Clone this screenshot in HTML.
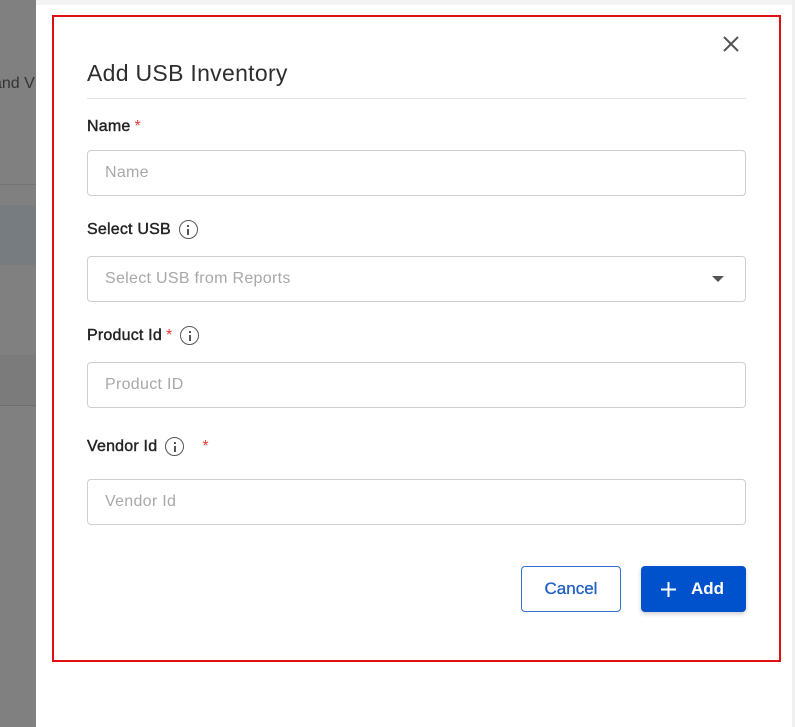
<!DOCTYPE html>
<html><head><style>
body{margin:0;width:795px;height:727px;background:#fff;position:relative;overflow:hidden;font-family:"Liberation Sans",sans-serif;}
.a{position:absolute}
.lbl{position:absolute;left:87px;font-size:16px;font-weight:normal;-webkit-text-stroke:0.4px #222;color:#222;letter-spacing:0.2px}
.req{color:#e53935;-webkit-text-stroke:0;margin-left:4px}
.inp{position:absolute;left:87px;width:657px;height:44px;border:1px solid #cfcfcf;border-radius:4px;box-sizing:content-box}
.ph{position:absolute;left:17px;top:13px;font-size:16px;color:#a8a8a8;letter-spacing:0.3px}
.info{display:inline-block;width:17px;height:17px;border:1.6px solid #555;border-radius:50%;vertical-align:-5px;position:relative;margin-left:8px;-webkit-text-stroke:0}
.info:before{content:"";position:absolute;left:7.5px;top:3.5px;width:2px;height:2px;background:#555}
.info:after{content:"";position:absolute;left:7.5px;top:7.5px;width:2px;height:6px;background:#555}
</style></head><body>
<div class="a" style="left:0;top:0;width:36px;height:727px;background:#808080"></div>
<div class="a" style="left:0;top:184px;width:36px;height:1px;background:#737373"></div>
<div class="a" style="left:0;top:205px;width:36px;height:60px;background:#767c80"></div>
<div class="a" style="left:0;top:355px;width:36px;height:50px;background:#7b7b7b"></div>
<div class="a" style="left:0;top:405px;width:36px;height:1px;background:#6e6e6e"></div>
<div class="a" style="left:0;top:75px;font-size:16px;color:#333;white-space:nowrap;width:36px;overflow:hidden"><span style="margin-left:-7px">and V</span></div>
<div class="a" style="left:36px;top:0;width:759px;height:5px;background:#f3f3f3"></div>
<div class="a" style="left:792px;top:0;width:3px;height:727px;background:#f0f0f0"></div>
<div class="a" style="left:52px;top:15px;width:725px;height:643px;border:2px solid #e01010"></div>
<svg class="a" style="left:722px;top:35px" width="18" height="18"><path d="M2 2L16 16M16 2L2 16" stroke="#555" stroke-width="2"/></svg>
<div class="a" style="left:87px;top:60px;font-size:23px;color:#2e2e2e;letter-spacing:0.3px">Add USB Inventory</div>
<div class="a" style="left:87px;top:98px;width:659px;height:1px;background:#e2e2e2"></div>
<div class="lbl" style="top:118px">Name<span class="req">*</span></div>
<div class="inp" style="top:150px"><span class="ph">Name</span></div>
<div class="lbl" style="top:220px">Select USB<span class="info"></span></div>
<div class="inp" style="top:256px"><span class="ph">Select USB from Reports</span>
<svg class="a" style="left:624px;top:19px" width="12" height="8"><path d="M0 0H12L6 6Z" fill="#555"/></svg></div>
<div class="lbl" style="top:326px">Product Id<span class="req">*</span><span class="info" style="margin-left:8px"></span></div>
<div class="inp" style="top:362px"><span class="ph">Product ID</span></div>
<div class="lbl" style="top:437px">Vendor Id<span class="info"></span><span class="req" style="margin-left:18px">*</span></div>
<div class="inp" style="top:479px"><span class="ph">Vendor Id</span></div>
<div class="a" style="left:521px;top:566px;width:98px;height:44px;border:1px solid #2e6fd0;border-radius:4px;color:#1f5fc4;font-size:17px;text-align:center;line-height:44px;-webkit-text-stroke:0.3px #1f5fc4">Cancel</div>
<div class="a" style="left:641px;top:566px;width:105px;height:46px;background:#0052cc;border-radius:4px;color:#fff;font-size:17px;font-weight:bold;line-height:46px;box-shadow:0 2px 4px rgba(0,0,0,.2)">
<svg class="a" style="left:20px;top:16px" width="15" height="15"><path d="M7.5 0V15M0 7.5H15" stroke="#fff" stroke-width="2"/></svg>
<span style="position:absolute;left:50px">Add</span></div>
</body></html>
